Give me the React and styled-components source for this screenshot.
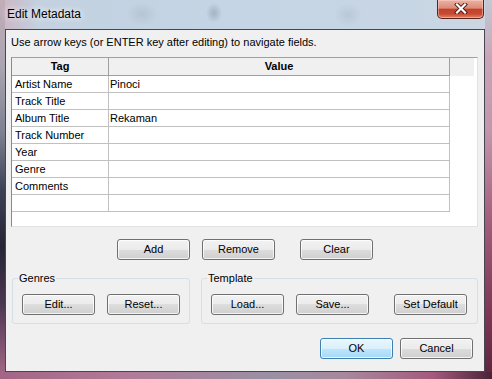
import styled, { createGlobalStyle } from 'styled-components'

const GlobalStyle = createGlobalStyle`
  html, body {
    margin: 0;
    padding: 0;
    width: 492px;
    height: 379px;
    overflow: hidden;
  }
  body {
    font-family: "Liberation Sans", Arial, sans-serif;
    font-size: 11px;
    color: #000;
  }
`

const tags = [
  ['Artist Name', 'Pinoci'],
  ['Track Title', ''],
  ['Album Title', 'Rekaman'],
  ['Track Number', ''],
  ['Year', ''],
  ['Genre', ''],
  ['Comments', ''],
  ['', ''],
]

const App = () => {
  return (
    <>
      <GlobalStyle />
      <Window>
        <TitleBar>
          <Caption>Edit Metadata</Caption>
          <CloseButton>
            <svg width="14" height="11" viewBox="0 0 14 11">
              <path d="M3 1.5 L11 9.5 M11 1.5 L3 9.5" stroke="#4a1a14" strokeWidth="4" strokeLinecap="square" />
              <path d="M3 1.5 L11 9.5 M11 1.5 L3 9.5" stroke="#fff" strokeWidth="2.2" strokeLinecap="square" />
            </svg>
          </CloseButton>
        </TitleBar>
        <Client>
          <Hint>Use arrow keys (or ENTER key after editing) to navigate fields.</Hint>
          <Grid>
            <HeadCell>Tag</HeadCell>
            <HeadCell>Value</HeadCell>
            <HeadFill />
            {tags.map(([tag, value], i) => (
              <Row key={i}>
                <Cell>{tag}</Cell>
                <Cell $value>{value}</Cell>
                <Fill />
              </Row>
            ))}
          </Grid>
          <ButtonRow>
            <Button $after={12}>Add</Button>
            <Button $after={25}>Remove</Button>
            <Button>Clear</Button>
          </ButtonRow>
          <GroupRow>
            <Group>
              <Legend>Genres</Legend>
              <GroupButtons>
                <Button $after={12}>Edit...</Button>
                <Button>Reset...</Button>
              </GroupButtons>
            </Group>
            <Group $grow>
              <Legend>Template</Legend>
              <GroupButtons>
                <Button $after={12}>Load...</Button>
                <Button $after={25}>Save...</Button>
                <Button>Set Default</Button>
              </GroupButtons>
            </Group>
          </GroupRow>
          <DialogButtons>
            <Button $default $after={7}>OK</Button>
            <Button>Cancel</Button>
          </DialogButtons>
        </Client>
      </Window>
    </>
  )
}

const Window = styled.div`
  width: 492px;
  height: 379px;
  box-sizing: border-box;
  padding: 0 7px 7px 5px;
  display: flex;
  flex-direction: column;
  background:
    linear-gradient(to right, #a36585 0%, #b27a98 25%, #9a90a4 55%, #a8889c 70%, #a45a7c 88%, #4a2236 100%) bottom / 100% 7px no-repeat,
    linear-gradient(to bottom, #c3c9d6 0%, #c8a6b8 15%, #c096ac 35%, #a05a7a 60%, #7a3452 85%, #5a2540 100%) right / 7px 100% no-repeat,
    linear-gradient(to bottom, #c2adb8 0%, #a8a4b0 18%, #7c8090 35%, #3e4256 50%, #262436 65%, #4a3650 80%, #a86a8a 100%) left / 5px 100% no-repeat,
    radial-gradient(ellipse 16px 12px at 142px 14px, rgba(140, 155, 170, 0.25), transparent),
    radial-gradient(ellipse 8px 10px at 214px 13px, rgba(90, 100, 115, 0.3), transparent),
    radial-gradient(ellipse 14px 12px at 348px 15px, rgba(140, 155, 170, 0.22), transparent),
    linear-gradient(to right, #cbb4c2 0%, #c3d1e0 8%, #c5d5e5 50%, #c8d6e4 85%, #ccd6e2 100%);
`

const TitleBar = styled.div`
  height: 29px;
  flex: none;
  display: flex;
  align-items: flex-start;
  justify-content: space-between;
`

const Caption = styled.div`
  margin: 7px 0 0 2px;
  font-size: 12px;
  line-height: 15px;
  color: #000;
  text-shadow: 0 0 6px rgba(255, 255, 255, 0.9), 0 0 10px rgba(255, 255, 255, 0.7);
`

const CloseButton = styled.div`
  width: 47px;
  height: 19px;
  margin-right: 1px;
  box-sizing: border-box;
  border: 1px solid #5c2218;
  border-top: none;
  border-radius: 0 0 5px 5px;
  background: linear-gradient(#eab2a4 0%, #dc8c78 45%, #c2412a 52%, #c84a34 78%, #e0856c 100%);
  box-shadow: inset 0 0 0 1px rgba(255, 220, 210, 0.45);
  display: flex;
  align-items: center;
  justify-content: center;
  padding-bottom: 1px;
`

const Client = styled.div`
  flex: 1;
  box-sizing: border-box;
  border: 1px solid #4a4650;
  background: #f0f0f0;
  padding: 0 6px 0 5px;
  display: flex;
  flex-direction: column;
`

const Hint = styled.div`
  margin: 5px 0 0 0;
  line-height: 14px;
  height: 14px;
`

const Grid = styled.div`
  margin-top: 8px;
  height: 170px;
  box-sizing: border-box;
  border: 1px solid;
  border-color: #a0a0a0 #e2e2e2 #e2e2e2 #8a8a8a;
  background: #fff;
  display: grid;
  grid-template-columns: 97px 341px 1fr;
  grid-template-rows: 18px;
  grid-auto-rows: 17px;
  align-content: start;
`

const HeadCell = styled.div`
  background: #f0f0f0;
  border-right: 1px solid #a0a0a0;
  border-bottom: 1px solid #a0a0a0;
  font-weight: bold;
  text-align: center;
  line-height: 17px;
`

const HeadFill = styled.div`
  background: #f0f0f0;
  margin-right: 3px;
`

const Row = styled.div`
  display: contents;
`

const Cell = styled.div`
  border-right: 1px solid #c0c0c0;
  border-bottom: 1px solid #c0c0c0;
  padding-left: ${p => (p.$value ? '1px' : '3px')};
  line-height: 16px;
  white-space: nowrap;
`

const Fill = styled.div``

const Button = styled.div`
  width: 73px;
  height: 21px;
  flex: none;
  box-sizing: border-box;
  margin-right: ${p => p.$after || 0}px;
  border: 1px solid ${p => (p.$default ? '#3c7fb1' : '#707070')};
  border-radius: 3px;
  background: ${p =>
    p.$default
      ? 'linear-gradient(#eaf6fd 0%, #d9f0fc 50%, #bee6fd 50%, #a7d9f5 100%)'
      : 'linear-gradient(#f2f2f2 0%, #ebebeb 50%, #dddddd 50%, #cfcfcf 100%)'};
  box-shadow: inset 0 0 0 1px rgba(255, 255, 255, 0.75);
  display: flex;
  align-items: center;
  justify-content: center;
  line-height: 13px;
  white-space: nowrap;
`

const ButtonRow = styled.div`
  margin-top: 12px;
  display: flex;
  justify-content: center;
  padding-left: 1px;
`

const GroupRow = styled.div`
  margin: 12px 0 0 1px;
  display: flex;
  gap: 11px;
`

const Group = styled.fieldset`
  margin: 0;
  padding: 9px 9px 8px 9px;
  border: 1px solid #d5dfe5;
  border-radius: 3px;
  flex: ${p => (p.$grow ? '1' : 'none')};
  min-width: 0;
`

const Legend = styled.legend`
  padding: 0 1px;
  margin-left: -4px;
  line-height: 13px;
`

const GroupButtons = styled.div`
  display: flex;
`

const DialogButtons = styled.div`
  margin: 14px 5px 0 0;
  display: flex;
  justify-content: flex-end;
`

export default App
